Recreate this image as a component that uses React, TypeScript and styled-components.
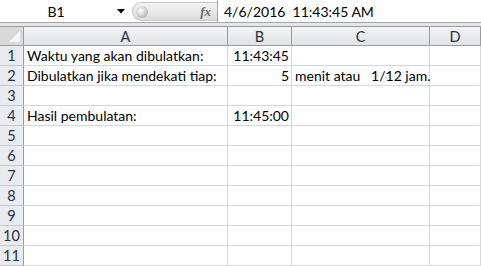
import React from 'react'
import styled, { createGlobalStyle } from 'styled-components'

const Global = createGlobalStyle`
    html, body {
        margin:0;
        padding:0;
        background:#ffffff;
        overflow:hidden;
    }
    body {
        font-family:Lato, "Open Sans", sans-serif;
    }
`

const Wrapper = styled.div`
    width:481px;
    height:266px;
    overflow:hidden;
    background:#ffffff;
`

const FormulaBar = styled.div`
    display:flex;
    align-items:stretch;
    height:22px;
    border-bottom:1px solid #a5a5a5;
    background:#ffffff;
`
const NameBox = styled.div`
    width:112px;
    display:flex;
    align-items:center;
    justify-content:center;
    font-size:14px;
    color:#000;
`
const Arrow = styled.div`
    width:18px;
    display:flex;
    align-items:center;
    justify-content:center;
`
const FxPill = styled.div`
    margin:2px 0 1px 2px;
    width:85px;
    border-radius:10px 0 0 10px;
    background:linear-gradient(#f4f4f4, #dcdcdc);
    border:1px solid #c6c6c6;
    border-right:none;
    display:flex;
    align-items:center;
    justify-content:space-between;
    padding:0 6px 0 3px;
    box-sizing:border-box;
`
const Knob = styled.div`
    width:12px;
    height:12px;
    border-radius:50%;
    background:radial-gradient(circle at 40% 40%, #ffffff, #b8b8b8 70%);
`
const Fx = styled.span`
    font-family:"Liberation Serif", serif;
    font-style:italic;
    font-weight:bold;
    font-size:13px;
    color:#6a6a6a;
`
const FormulaText = styled.div`
    flex:1;
    border-left:1px solid #a5a5a5;
    display:flex;
    align-items:center;
    padding-left:6px;
    font-size:14px;
    color:#000;
    white-space:pre;
`
const Spacer = styled.div`
    height:3px;
    background:#e3e6ea;
    border-bottom:1px solid #9a9a9a;
`

const Grid = styled.div`
    display:grid;
    grid-template-columns:24px 204px 64px 138px 1fr;
    grid-auto-rows:20px;
    grid-template-rows:19px;
`
const Corner = styled.div`
    background:#d9d9d9;
    border-right:1px solid #9c9c9c;
    border-bottom:1px solid #9c9c9c;
    position:relative;
    &::after {
        content:'';
        position:absolute;
        right:3px;
        bottom:3px;
        border-style:solid;
        border-width:0 0 11px 11px;
        border-color:transparent transparent #f7f7f7 transparent;
    }
`
const ColHead = styled.div`
    background:linear-gradient(#f3f4f5, #e0e2e5);
    border-right:1px solid #9c9c9c;
    border-bottom:1px solid #9c9c9c;
    display:flex;
    align-items:center;
    justify-content:center;
    font-size:14.5px;
    color:#26324a;
    box-sizing:border-box;
`
const RowHead = styled.div`
    background:#e9ebee;
    border-right:1px solid #9c9c9c;
    border-bottom:1px solid #c5c9cf;
    display:flex;
    align-items:center;
    justify-content:center;
    font-size:14.5px;
    color:#26324a;
    box-sizing:border-box;
`
const Cell = styled.div<{ $align?: 'left' | 'right' }>`
    border-right:1px solid #d0d7e5;
    border-bottom:1px solid #d0d7e5;
    display:flex;
    align-items:flex-end;
    justify-content:${p => p.$align === 'right' ? 'flex-end' : 'flex-start'};
    padding:0 2px 1px 3px;
    font-size:14px;
    color:#000;
    white-space:pre;
    overflow:visible;
    box-sizing:border-box;
`

const columns = ['A', 'B', 'C', 'D']

const rows: { a?: string; b?: string; c?: string }[] = [
    { a: 'Waktu yang akan dibulatkan:', b: '11:43:45' },
    { a: 'Dibulatkan jika mendekati tiap:', b: '5', c: 'menit atau   1/12 jam.' },
    {},
    { a: 'Hasil pembulatan:', b: '11:45:00' },
    {}, {}, {}, {}, {}, {}, {},
]

const App: React.FunctionComponent = () => {
    return (
        <Wrapper>
            <Global />
            <FormulaBar>
                <NameBox>B1</NameBox>
                <Arrow>
                    <svg width="8" height="5" viewBox="0 0 8 5">
                        <path d="M0 0 L8 0 L4 4.5 Z" fill="#000" />
                    </svg>
                </Arrow>
                <FxPill>
                    <Knob />
                    <Fx>fx</Fx>
                </FxPill>
                <FormulaText>4/6/2016  11:43:45 AM</FormulaText>
            </FormulaBar>
            <Spacer />
            <Grid>
                <Corner />
                {columns.map(c => <ColHead key={c}>{c}</ColHead>)}
                {rows.map((r, i) => (
                    <React.Fragment key={i}>
                        <RowHead>{i + 1}</RowHead>
                        <Cell>{r.a}</Cell>
                        <Cell $align="right">{r.b}</Cell>
                        <Cell>{r.c}</Cell>
                        <Cell />
                    </React.Fragment>
                ))}
            </Grid>
        </Wrapper>
    )
}
export default App
